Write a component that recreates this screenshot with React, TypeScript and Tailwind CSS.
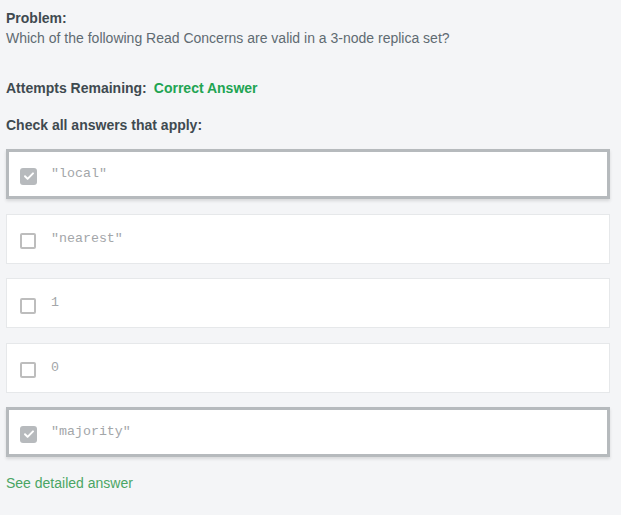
import React from 'react';

type Option = { label: string; checked: boolean };

const options: Option[] = [
  { label: '"local"', checked: true },
  { label: '"nearest"', checked: false },
  { label: '1', checked: false },
  { label: '0', checked: false },
  { label: '"majority"', checked: true },
];

const Checkbox: React.FC<{ checked: boolean }> = ({ checked }) =>
  checked ? (
    <span className="flex h-[17px] w-[17px] items-center justify-center rounded-[3px] bg-[#b7babd]">
      <svg width="12" height="12" viewBox="0 0 12 12" fill="none">
        <path d="M2 6.3l2.6 2.6L10 3.4" stroke="white" strokeWidth="2" strokeLinecap="round" strokeLinejoin="round" />
      </svg>
    </span>
  ) : (
    <span className="block h-[16px] w-[16px] rounded-[2px] border-2 border-[#bdbdbd] bg-white" />
  );

export default function App() {
  return (
    <div className="min-h-[515px] w-[621px] bg-[#f4f5f7] pl-[6px] pr-[11px] pt-[10px] font-['Liberation_Sans',Arial,sans-serif]">
      <div className="text-[14px] font-bold leading-[17px] text-[#3f4a50]">Problem:</div>
      <p className="mt-[3px] text-[14px] leading-[17px] text-[#5f6b72]">
        Which of the following Read Concerns are valid in a 3-node replica set?
      </p>

      <div className="mt-[33px] flex items-center gap-[7px] text-[14px] font-bold leading-[17px]">
        <span className="text-[#3f4a50]">Attempts Remaining:</span>
        <span className="text-[#21a452]">Correct Answer</span>
      </div>

      <div className="mt-[20px] text-[14px] font-bold leading-[17px] text-[#3f4a50]">
        Check all answers that apply:
      </div>

      <div className="mt-[15px] flex flex-col gap-[14.5px]">
        {options.map((o) => (
          <div
            key={o.label}
            className={
              o.checked
                ? 'flex h-[50px] items-center gap-[14px] border-[3px] border-[#b6babd] bg-white pl-[11px] shadow-[0_2px_3px_rgba(0,0,0,0.12)]'
                : 'flex h-[50px] items-center gap-[15px] border border-[#e6e8ea] bg-white pl-[13px]'
            }
          >
            <span className={o.checked ? 'mt-[4px]' : 'mt-[5px]'}>
              <Checkbox checked={o.checked} />
            </span>
            <span className="font-['Liberation_Mono','DejaVu_Sans_Mono',monospace] text-[13.3px] leading-[16px] text-[#a3a6a9]">
              {o.label}
            </span>
          </div>
        ))}
      </div>

      <div className="mt-[18px] text-[14px] leading-[17px] text-[#4aa564]">See detailed answer</div>
    </div>
  );
}
